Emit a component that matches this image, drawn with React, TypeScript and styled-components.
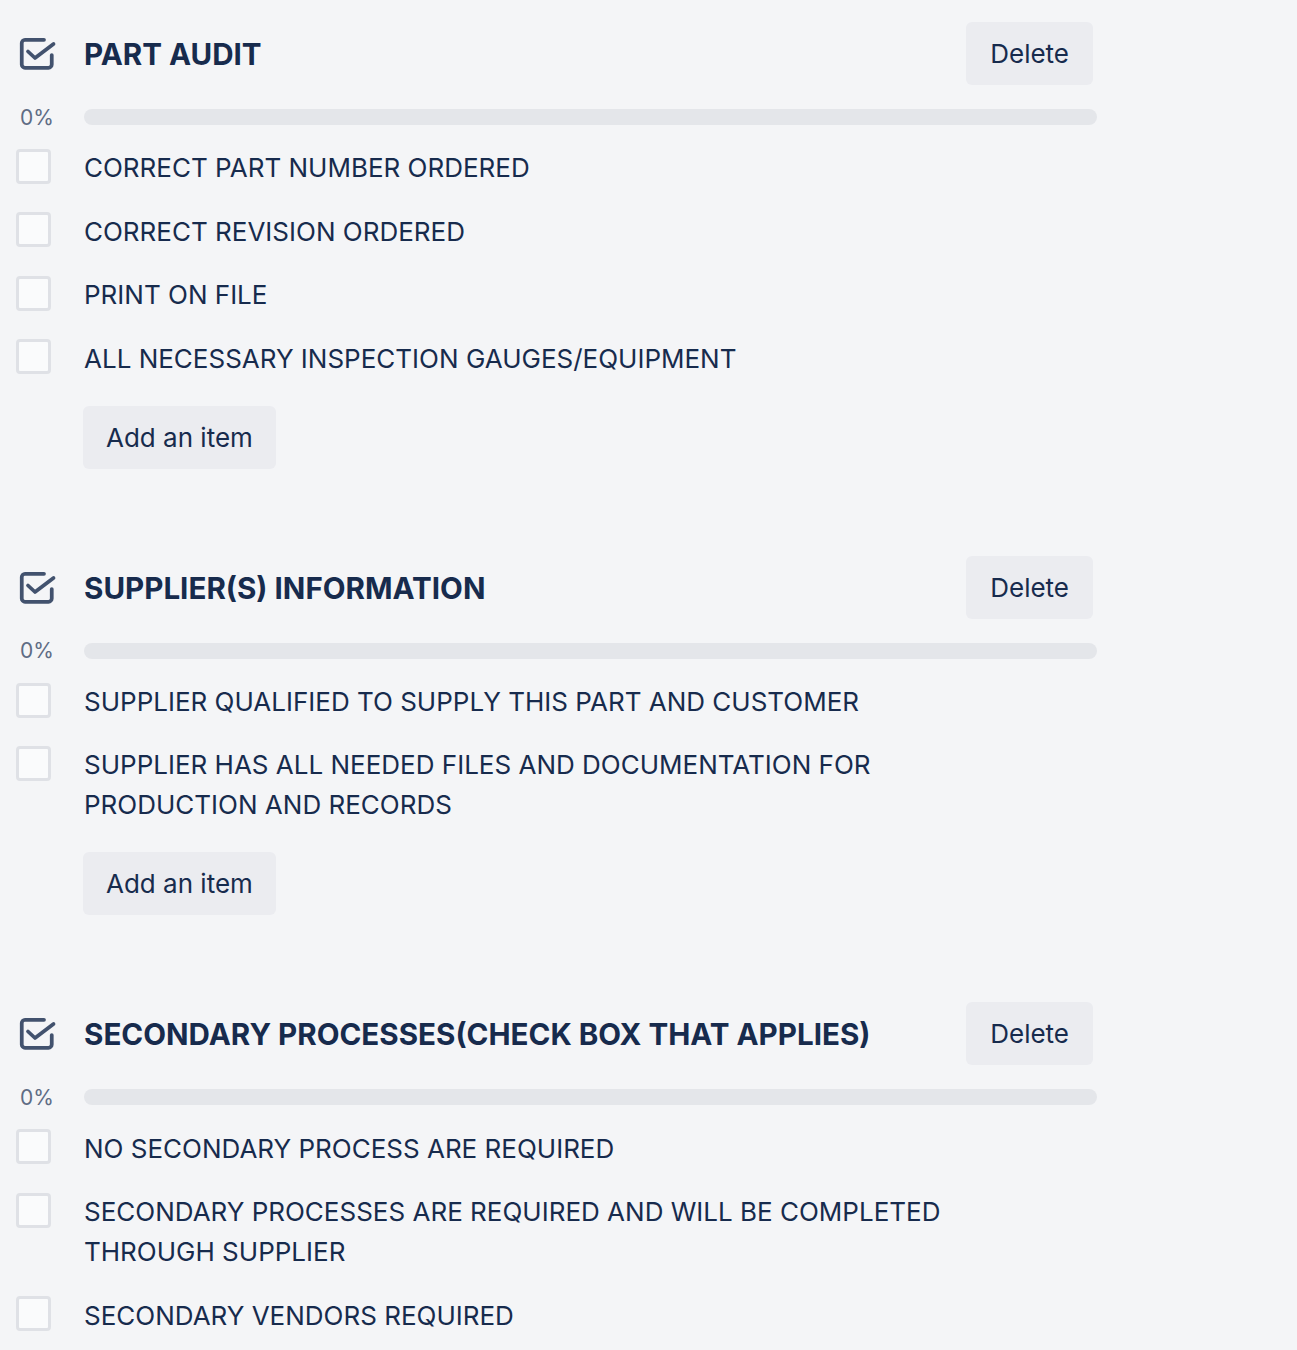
import styled, { createGlobalStyle } from "styled-components";

const GlobalStyles = createGlobalStyle`
  * {
    margin: 0;
    padding: 0;
    box-sizing: border-box;
  }

  body {
    background: #f4f5f7;
    font-family: Inter, "Noto Sans", "Liberation Sans", sans-serif;
    color: #172b4d;
    -webkit-font-smoothing: antialiased;
  }
`;

const checklists = [
  {
    title: "PART AUDIT",
    items: [
      "CORRECT PART NUMBER ORDERED",
      "CORRECT REVISION ORDERED",
      "PRINT ON FILE",
      "ALL NECESSARY INSPECTION GAUGES/EQUIPMENT",
    ],
    addButton: true,
  },
  {
    title: "SUPPLIER(S) INFORMATION",
    items: [
      "SUPPLIER QUALIFIED TO SUPPLY THIS PART AND CUSTOMER",
      "SUPPLIER HAS ALL NEEDED FILES AND DOCUMENTATION FOR PRODUCTION AND RECORDS",
    ],
    addButton: true,
  },
  {
    title: "SECONDARY PROCESSES(CHECK BOX THAT APPLIES)",
    items: [
      "NO SECONDARY PROCESS ARE REQUIRED",
      "SECONDARY PROCESSES ARE REQUIRED AND WILL BE COMPLETED THROUGH SUPPLIER",
      "SECONDARY VENDORS REQUIRED",
    ],
    addButton: false,
  },
];

function ChecklistIcon() {
  return (
    <svg width="36" height="32" viewBox="0 0 36 32" fill="none" style={{ overflow: "visible" }}>
      <path
        d="M24 1.75H5a3.25 3.25 0 0 0-3.25 3.25v21.5A3.25 3.25 0 0 0 5 29.75h23.5a3.25 3.25 0 0 0 3.25-3.25V17"
        stroke="#42526e"
        strokeWidth="3.75"
        strokeLinecap="round"
      />
      <path
        d="M8 13.5l7 6.5L33.5 6"
        stroke="#42526e"
        strokeWidth="3.75"
        strokeLinecap="round"
        strokeLinejoin="round"
      />
    </svg>
  );
}

function App() {
  return (
    <Page>
      <GlobalStyles />
      {checklists.map((list) => (
        <Checklist key={list.title}>
          <Header>
            <IconCell>
              <ChecklistIcon />
            </IconCell>
            <Title>{list.title}</Title>
            <GreyButton>Delete</GreyButton>
          </Header>
          <Progress>
            <Percent>0%</Percent>
            <Bar>
              <Fill style={{ width: "0%" }} />
            </Bar>
          </Progress>
          <Items>
            {list.items.map((item) => (
              <Item key={item}>
                <BoxCell>
                  <Box />
                </BoxCell>
                <ItemText>{item}</ItemText>
              </Item>
            ))}
          </Items>
          {list.addButton && (
            <AddRow>
              <GreyButton>Add an item</GreyButton>
            </AddRow>
          )}
        </Checklist>
      ))}
    </Page>
  );
}

export default App;

const Page = styled.div`
  padding-top: 22px;
  width: 1297px;
  min-height: 1350px;
  background: #f4f5f7;
`;

const Checklist = styled.section`
  width: 1097px;
  margin-bottom: 87px;
`;

const Header = styled.div`
  display: flex;
  align-items: center;
  height: 63px;
`;

const IconCell = styled.div`
  width: 84px;
  flex-shrink: 0;
  padding-left: 20px;
  display: flex;
  align-items: center;
  padding-top: 1px;
`;

const Title = styled.h3`
  flex: 1;
  font-size: 29.6px;
  font-weight: 700;
  line-height: 40px;
  padding-top: 1px;
  color: #172b4d;
`;

const GreyButton = styled.button`
  height: 63px;
  padding: 0 24px;
  margin-right: 4px;
  border: none;
  border-radius: 6px;
  background: #ebecf0;
  color: #172b4d;
  font-family: inherit;
  font-size: 26px;
  font-weight: 400;
  cursor: pointer;
`;

const Progress = styled.div`
  display: flex;
  align-items: center;
  height: 24px;
  margin-top: 20px;
`;

const Percent = styled.span`
  width: 84px;
  flex-shrink: 0;
  padding-left: 20px;
  font-size: 21px;
  color: #5e6c84;
`;

const Bar = styled.div`
  flex: 1;
  height: 16px;
  border-radius: 8px;
  background: #e4e6ea;
  overflow: hidden;
`;

const Fill = styled.div`
  height: 100%;
  background: #61bd4f;
`;

const Items = styled.div`
  margin-top: 7px;
`;

const Item = styled.div`
  display: flex;
  align-items: flex-start;
`;

const BoxCell = styled.div`
  width: 84px;
  flex-shrink: 0;
  padding: 13px 0 0 16px;
`;

const Box = styled.div`
  width: 35px;
  height: 35px;
  border: 3px solid #dfe1e6;
  border-radius: 4px;
  background: #fafbfc;
`;

const ItemText = styled.div`
  flex: 1;
  padding: 12.4px 0 11px;
  font-size: 26px;
  line-height: 40px;
  color: #172b4d;
  max-width: 900px;
`;

const AddRow = styled.div`
  margin-top: 16px;
  padding-left: 83px;

  ${GreyButton} {
    margin-right: 0;
    padding: 0 23px;
  }
`;
